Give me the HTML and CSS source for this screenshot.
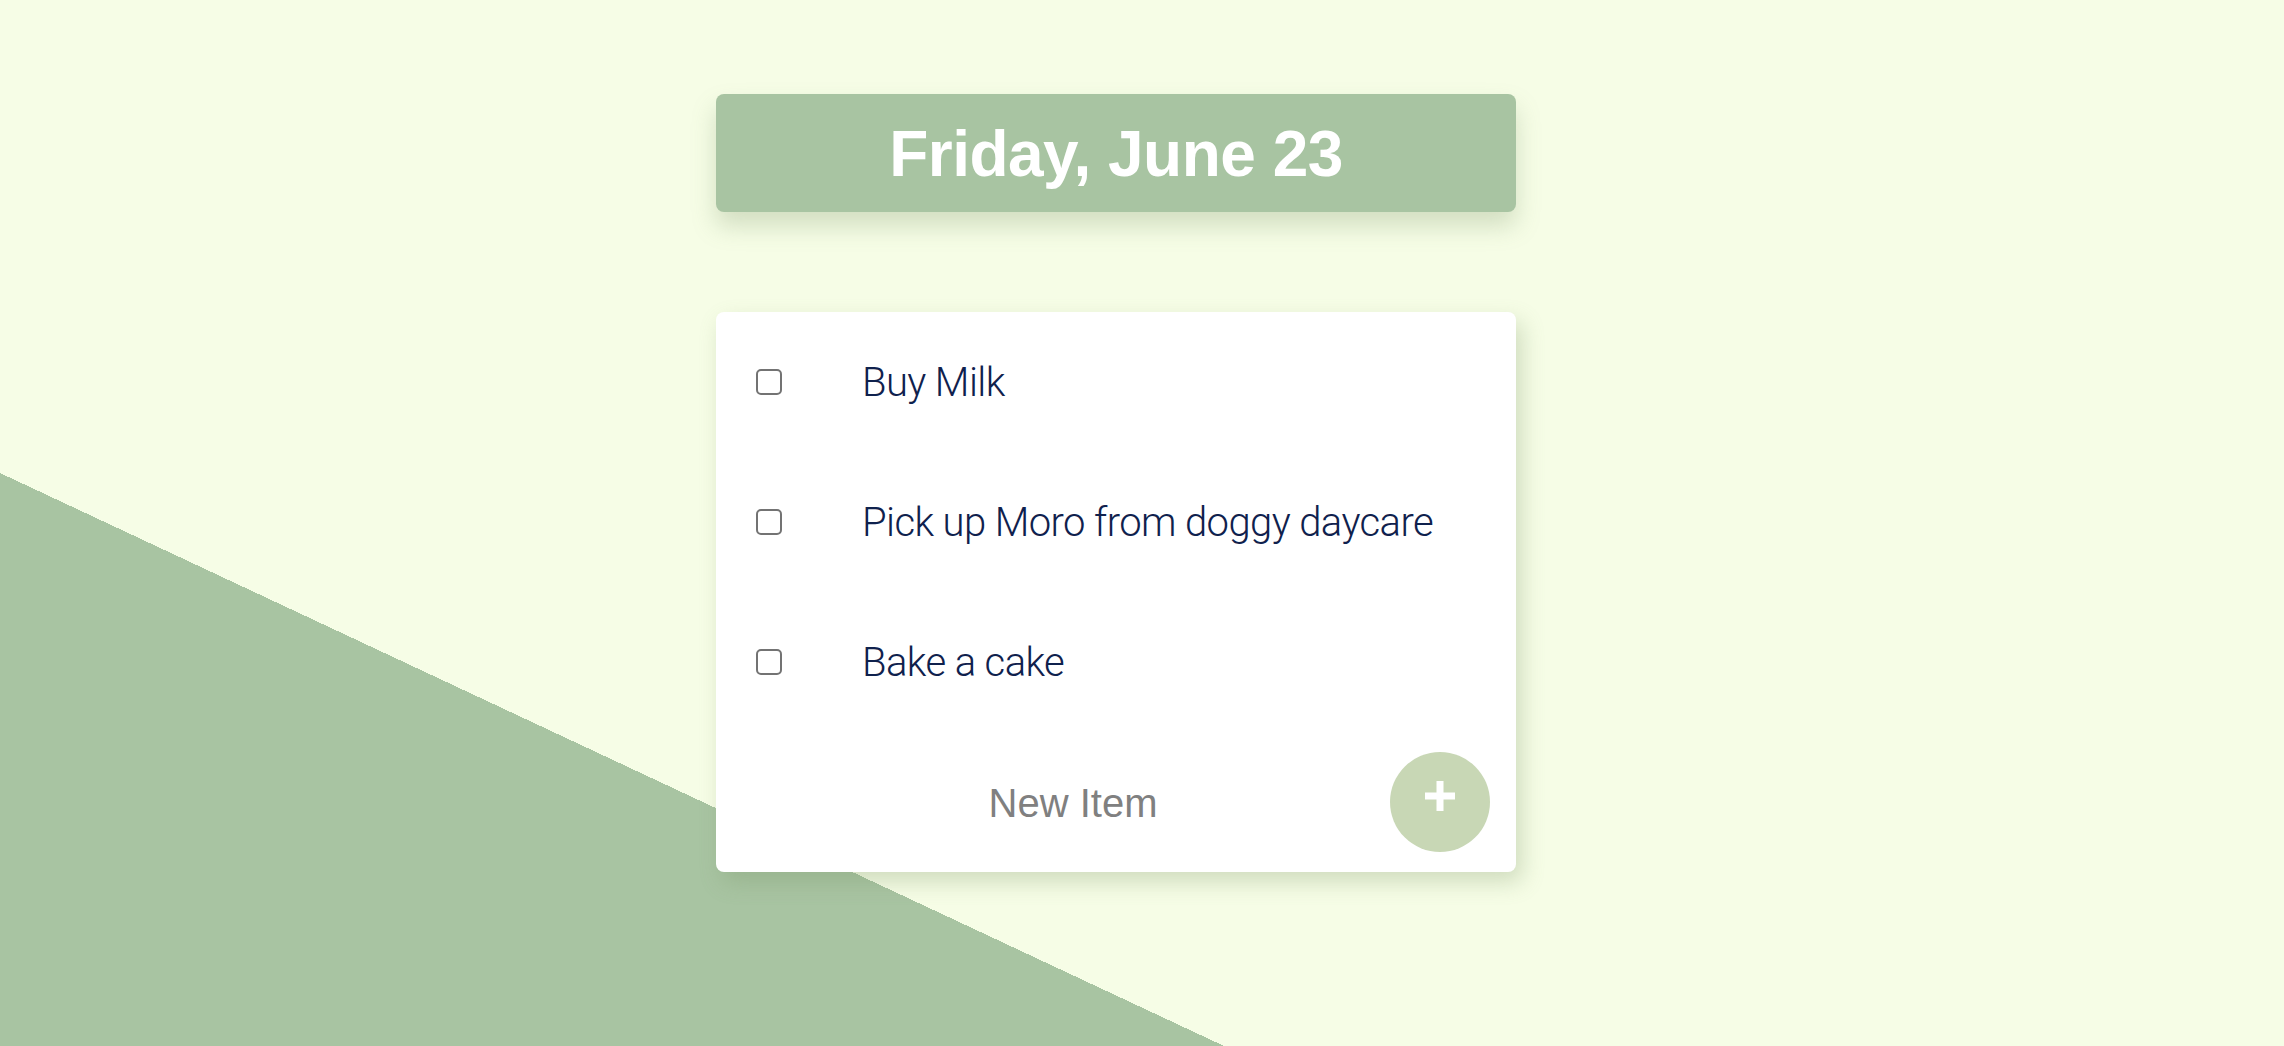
FILE: index.html
```html
<!DOCTYPE html>
<html lang="en">
<head>
<meta charset="utf-8">
<title>To-Do List</title>
<link rel="stylesheet" href="styles.css">
</head>
<body>
<main class="page">
  <header class="date-box">
    <h1 class="date">Friday, June 23</h1>
  </header>
  <section class="card">
    <div class="item">
      <input type="checkbox" class="check">
      <p class="item-text">Buy Milk</p>
    </div>
    <div class="item">
      <input type="checkbox" class="check">
      <p class="item-text">Pick up Moro from doggy daycare</p>
    </div>
    <div class="item">
      <input type="checkbox" class="check">
      <p class="item-text">Bake a cake</p>
    </div>
    <form class="new-row">
      <input type="text" class="new-input" placeholder="New Item" autocomplete="off">
      <button type="button" class="add-btn" aria-label="Add">
        <svg class="plus" width="30" height="30" viewBox="0 0 30 30" aria-hidden="true">
          <rect x="11.5" y="0" width="7" height="30" fill="#ffffff"/>
          <rect x="0" y="11.5" width="30" height="7" fill="#ffffff"/>
        </svg>
      </button>
    </form>
  </section>
</main>
</body>
</html>
```
FILE: styles.css
```css
html, body {
  margin: 0;
  padding: 0;
  height: 100%;
}

body {
  background-color: #f6fde6;
  background-image: linear-gradient(to top right, #a8c4a2 50%, rgba(168, 196, 162, 0) 50%);
  background-repeat: no-repeat;
  background-position: left bottom;
  background-size: 1224px 573px;
  font-family: "Liberation Sans", Arial, sans-serif;
  overflow: hidden;
}

.page {
  display: flex;
  flex-direction: column;
  align-items: center;
  padding: 94px 52px 0 0;
  gap: 100px;
}

.date-box {
  width: 800px;
  height: 118px;
  background: #a8c4a2;
  border-radius: 8px;
  box-shadow: 0 14px 24px rgba(120, 145, 100, 0.28);
  display: flex;
  align-items: center;
  justify-content: center;
}

.date {
  margin: 0;
  color: #ffffff;
  font-family: "Liberation Sans", Arial, sans-serif;
  font-weight: 700;
  font-size: 64px;
  letter-spacing: -0.5px;
  line-height: 1;
  padding-top: 2px;
}

.card {
  width: 800px;
  background: #ffffff;
  border-radius: 8px;
  box-shadow: 6px 10px 22px rgba(120, 145, 100, 0.3);
  display: flex;
  flex-direction: column;
}

.item {
  height: 140px;
  display: flex;
  align-items: center;
  padding-left: 40px;
}

.check {
  appearance: none;
  -webkit-appearance: none;
  width: 26px;
  height: 26px;
  margin: 0 80px 0 0;
  border: 2px solid #737373;
  border-radius: 5px;
  background: #ffffff;
  box-sizing: border-box;
  flex: none;
}

.item-text {
  margin: 0;
  font-family: Roboto, "Liberation Sans", sans-serif;
  font-weight: 300;
  font-size: 40px;
  color: #0f214d;
  letter-spacing: -0.6px;
}

.new-row {
  height: 140px;
  margin: 0;
  display: flex;
  align-items: center;
  padding: 0 26px 0 40px;
}

.new-input {
  flex: 1;
  min-width: 0;
  border: none;
  outline: none;
  background: transparent;
  text-align: center;
  font-family: "Liberation Sans", Arial, sans-serif;
  font-size: 40px;
  color: #333333;
  padding: 0;
  margin-top: 2px;
}

.new-input::placeholder {
  color: #808080;
  opacity: 1;
}

.add-btn {
  width: 100px;
  height: 100px;
  border-radius: 50%;
  border: none;
  background: #c8d7b5;
  padding: 0 0 12px 0;
  flex: none;
  display: flex;
  align-items: center;
  justify-content: center;
  cursor: pointer;
}

.plus {
  display: block;
}
```
